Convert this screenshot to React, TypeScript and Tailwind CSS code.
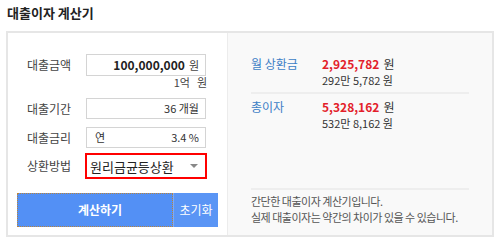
import React from 'react'

const font = { fontFamily: '"Noto Sans CJK KR", "Noto Sans", sans-serif' }

export default function App() {
  return (
    <div className="w-[500px] h-[242px] bg-white text-[#333]" style={font}>
      {/* Title */}
      <div className="h-[31px] pl-[7px] pt-[4px] text-[13px] font-bold leading-[18px] text-[#222]">
        대출이자 계산기
      </div>

      <div className="ml-[6px] w-[488px] h-[206px] border-2 border-[#e6e6e6] flex">
        {/* Left: inputs */}
        <div className="w-[220px] border-r border-[#ececec] bg-white pt-[21px] pl-[9px] text-[12px]">
          <div className="flex items-center h-[22px]">
            <span className="w-[69px] pl-[10px] text-[#444]">대출금액</span>
            <div className="w-[120px] h-[22px] border border-[#d4d4d4] flex items-center justify-end pr-[6px] leading-none">
              <span className="font-bold text-[#222] text-[12px]">100,000,000</span>
              <span className="ml-[4px] text-[#444] text-[11px]">원</span>
            </div>
          </div>
          <div className="h-[22px] flex items-start justify-end w-[190px] text-[11px] text-[#444] leading-[12px]">
            1억 <span className="ml-[7px]">원</span>
          </div>

          <div className="flex items-center h-[21px]">
            <span className="w-[69px] pl-[10px] text-[#444]">대출기간</span>
            <div className="w-[120px] h-[21px] border border-[#d4d4d4] flex items-center justify-end pr-[6px] leading-none text-[11px] text-[#333]">
              36 개월
            </div>
          </div>

          <div className="flex items-center h-[21px] mt-[8px]">
            <span className="w-[69px] pl-[10px] text-[#444]">대출금리</span>
            <div className="w-[120px] h-[21px] border border-[#d4d4d4] flex items-center justify-between pl-[8px] pr-[6px] leading-none text-[11px] text-[#333]">
              <span>연</span>
              <span>3.4 %</span>
            </div>
          </div>

          <div className="flex items-center h-[26px] mt-[5px]">
            <span className="w-[68px] pl-[10px] text-[#444]">상환방법</span>
            <div className="w-[122px] h-[26px] border-2 border-[#ff0000] flex items-center justify-between pl-[3px] pr-[7px] leading-none">
              <span className="text-[13px] text-[#222]">원리금균등상환</span>
              <span className="w-0 h-0 border-l-[4px] border-r-[4px] border-t-[4px] border-l-transparent border-r-transparent border-t-[#888]" />
            </div>
          </div>

          <div className="flex mt-[14px] h-[34px] w-[201px]">
            <button className="w-[156px] h-full bg-[#5390f5] border border-dotted border-[#b9843c] pl-[10px] text-white text-[12px] font-bold leading-none">
              계산하기
            </button>
            <button className="flex-1 h-full bg-[#5a95f5] border-l border-[#7eabf7] text-white text-[12px] leading-none">
              초기화
            </button>
          </div>
        </div>

        {/* Right: results */}
        <div className="flex-1 bg-[#f9f9f9] px-[23px] pt-[22px] text-[12px] flex flex-col">
          <div className="flex">
            <span className="w-[71px] text-[#3c7ec6] leading-[17px]">월 상환금</span>
            <div className="flex flex-col">
              <div className="leading-[17px]">
                <span className="text-[#e31e2b] font-bold text-[12px]">2,925,782</span>
                <span className="ml-[4px] text-[#333]">원</span>
              </div>
              <div className="leading-[17px] text-[11px] text-[#333]">292만 5,782 원</div>
            </div>
          </div>

          <div className="h-[2px] bg-[#eeeeee] mt-[3px] mb-[4px]" />

          <div className="flex">
            <span className="w-[71px] text-[#3c7ec6] leading-[17px]">총이자</span>
            <div className="flex flex-col">
              <div className="leading-[17px]">
                <span className="text-[#e31e2b] font-bold text-[12px]">5,328,162</span>
                <span className="ml-[4px] text-[#333]">원</span>
              </div>
              <div className="leading-[17px] text-[11px] text-[#333]">532만 8,162 원</div>
            </div>
          </div>

          <div className="h-[2px] bg-[#eeeeee] mt-[56px]" />
          <div className="pt-[3px] text-[11px] text-[#555] leading-[16px] whitespace-nowrap tracking-[-0.5px]">
            <div>간단한 대출이자 계산기입니다.</div>
            <div>실제 대출이자는 약간의 차이가 있을 수 있습니다.</div>
          </div>
        </div>
      </div>
    </div>
  )
}
